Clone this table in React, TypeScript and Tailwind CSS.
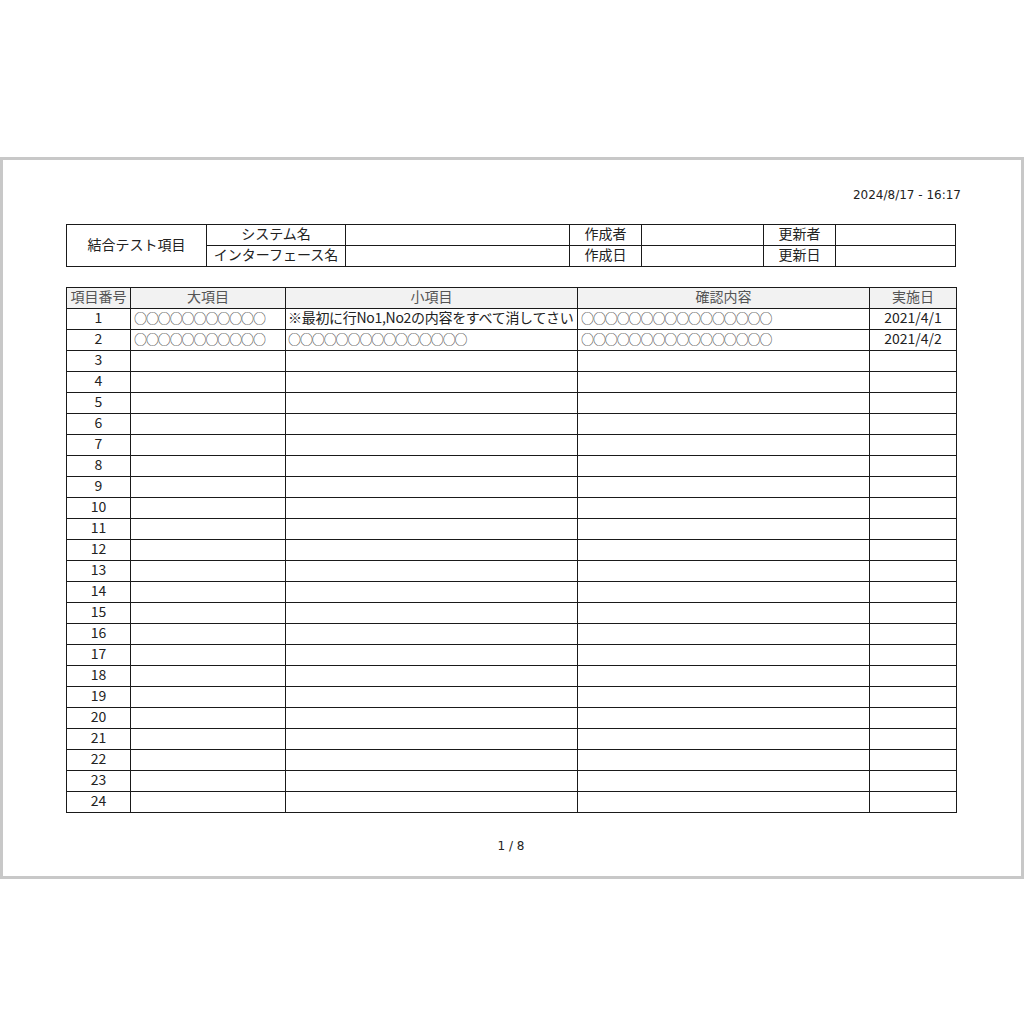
const jp = { fontFamily: '"Noto Sans CJK JP", "Noto Sans", sans-serif' }

const rows = Array.from({ length: 24 }, (_, i) => i + 1)

const data: Record<number, { major: string; minor: string; check: string; date: string }> = {
  1: {
    major: '○○○○○○○○○○○',
    minor: '※最初に行No1,No2の内容をすべて消してさい',
    check: '○○○○○○○○○○○○○○○○',
    date: '2021/4/1',
  },
  2: {
    major: '○○○○○○○○○○○',
    minor: '○○○○○○○○○○○○○○○',
    check: '○○○○○○○○○○○○○○○○',
    date: '2021/4/2',
  },
}

const cell = 'border border-[#1a1a1a] h-[21px] p-0 pb-[3px] leading-[17px]'

const Circles = ({ text }: { text: string }) => (
  <span className="text-[13px] tracking-[-1.1px] text-[#444]">{text}</span>
)

const App = () => {
  return (
    <div className="w-[1024px] h-[1024px] bg-white pt-[157px]" style={jp}>
      <div className="h-[722px] border-[3px] border-[#c8c8c8] flex flex-col">
        {/* print timestamp */}
        <div className="h-[64px] flex items-start justify-end pr-[60px] pt-[26px]">
          <span className="text-[12px] text-[#222] font-medium" style={{ fontFamily: '"DejaVu Sans", sans-serif' }}>
            2024/8/17 - 16:17
          </span>
        </div>

        <div className="ml-[63px] w-[890px] flex flex-col">
          {/* header info */}
          <table className="table-fixed border-collapse w-[889px] text-[14px] text-[#222]">
            <colgroup>
              <col className="w-[140px]" />
              <col className="w-[139px]" />
              <col className="w-[224px]" />
              <col className="w-[72px]" />
              <col className="w-[122px]" />
              <col className="w-[72px]" />
              <col className="w-[120px]" />
            </colgroup>
            <tbody>
              <tr>
                <td rowSpan={2} className={`${cell} text-center`}>結合テスト項目</td>
                <td className={`${cell} text-center`}>システム名</td>
                <td className={cell}></td>
                <td className={`${cell} text-center`}>作成者</td>
                <td className={cell}></td>
                <td className={`${cell} text-center`}>更新者</td>
                <td className={cell}></td>
              </tr>
              <tr>
                <td className={`${cell} text-center`}>インターフェース名</td>
                <td className={cell}></td>
                <td className={`${cell} text-center`}>作成日</td>
                <td className={cell}></td>
                <td className={`${cell} text-center`}>更新日</td>
                <td className={cell}></td>
              </tr>
            </tbody>
          </table>

          {/* test items */}
          <table className="mt-[20px] table-fixed border-collapse w-[890px] text-[14px] text-[#222]">
            <colgroup>
              <col className="w-[64px]" />
              <col className="w-[155px]" />
              <col className="w-[292px]" />
              <col className="w-[292px]" />
              <col className="w-[87px]" />
            </colgroup>
            <thead>
              <tr className="bg-[#f2f2f2] text-[#555]">
                <th className={`${cell} font-normal text-center`}>項目番号</th>
                <th className={`${cell} font-normal text-center`}>大項目</th>
                <th className={`${cell} font-normal text-center`}>小項目</th>
                <th className={`${cell} font-normal text-center`}>確認内容</th>
                <th className={`${cell} font-normal text-center`}>実施日</th>
              </tr>
            </thead>
            <tbody>
              {rows.map((n) => {
                const d = data[n]
                return (
                  <tr key={n}>
                    <td className={`${cell} text-center`}>{n}</td>
                    <td className={`${cell} pl-[3px] whitespace-nowrap overflow-hidden`}>{d && <Circles text={d.major} />}</td>
                    <td className={`${cell} pl-[2px] whitespace-nowrap overflow-hidden`}>
                      {d && (n === 1 ? <span className="tracking-[-0.3px]">{d.minor}</span> : <Circles text={d.minor} />)}
                    </td>
                    <td className={`${cell} pl-[3px] whitespace-nowrap overflow-hidden`}>{d && <Circles text={d.check} />}</td>
                    <td className={`${cell} text-center`}>{d?.date}</td>
                  </tr>
                )
              })}
            </tbody>
          </table>

          {/* page number */}
          <div className="mt-[24px] flex justify-center">
            <span className="text-[12px] text-[#222]" style={{ fontFamily: '"DejaVu Sans", sans-serif' }}>1 / 8</span>
          </div>
        </div>
      </div>
    </div>
  )
}

export default App
